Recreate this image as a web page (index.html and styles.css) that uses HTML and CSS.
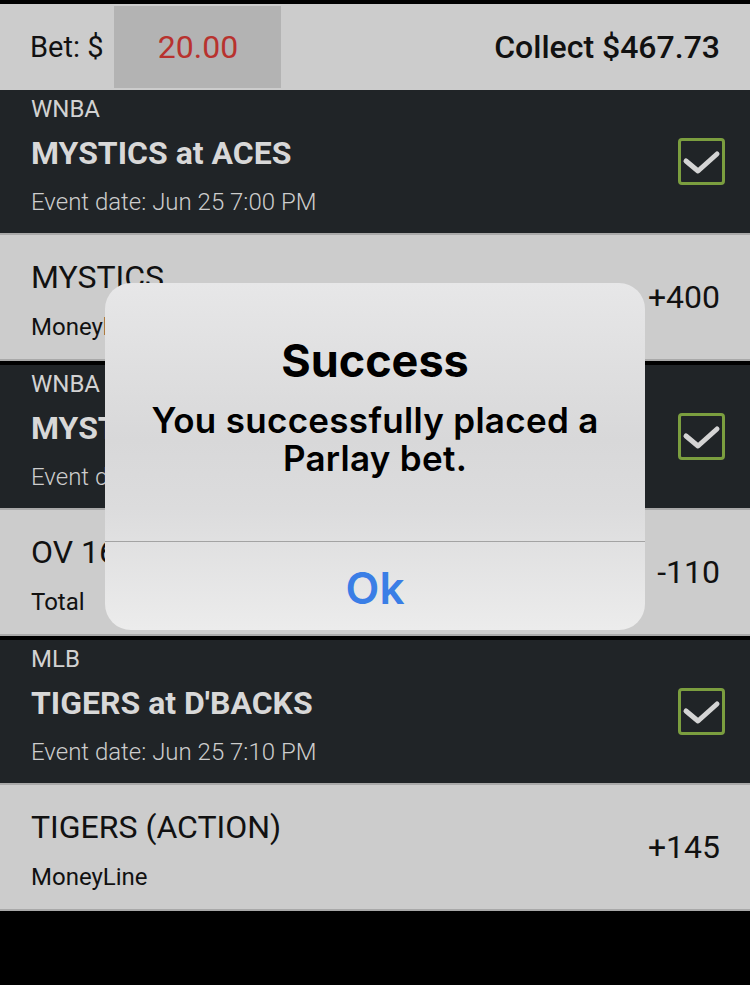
FILE: index.html
```html
<!DOCTYPE html>
<html lang="en">
<head>
    <meta charset="UTF-8">
    <meta name="viewport" content="width=device-width, initial-scale=1.0">
    <title>Parlay Slip</title>
    <link rel="stylesheet" href="styles.css">
</head>
<body>
    <div class="slip">
        <!-- Bet amount and payout -->
        <header class="bet-bar">
            <span class="bet-label">Bet: $</span>
            <span class="bet-input">20.00</span>
            <span class="collect">Collect $467.73</span>
        </header>

        <section class="leg">
            <div class="event">
                <div class="event-info">
                    <div class="league">WNBA</div>
                    <div class="matchup">MYSTICS at ACES</div>
                    <div class="event-date">Event date: Jun 25 7:00 PM</div>
                </div>
                <span class="check">
                    <svg viewBox="3 3 41 41" width="41" height="41"><polyline points="8,23 20,33 39,16" /></svg>
                </span>
            </div>
            <div class="pick">
                <div class="pick-info">
                    <div class="pick-name">MYSTICS</div>
                    <div class="pick-type">Moneyline</div>
                </div>
                <div class="odds">+400</div>
            </div>
        </section>

        <section class="leg">
            <div class="event">
                <div class="event-info">
                    <div class="league">WNBA</div>
                    <div class="matchup">MYSTICS at ACES</div>
                    <div class="event-date">Event date: Jun 25 7:00 PM</div>
                </div>
                <span class="check">
                    <svg viewBox="3 3 41 41" width="41" height="41"><polyline points="8,23 20,33 39,16" /></svg>
                </span>
            </div>
            <div class="pick">
                <div class="pick-info">
                    <div class="pick-name">OV 164.5</div>
                    <div class="pick-type">Total</div>
                </div>
                <div class="odds">-110</div>
            </div>
        </section>

        <section class="leg">
            <div class="event">
                <div class="event-info">
                    <div class="league">MLB</div>
                    <div class="matchup">TIGERS at D'BACKS</div>
                    <div class="event-date">Event date: Jun 25 7:10 PM</div>
                </div>
                <span class="check">
                    <svg viewBox="3 3 41 41" width="41" height="41"><polyline points="8,23 20,33 39,16" /></svg>
                </span>
            </div>
            <div class="pick">
                <div class="pick-info">
                    <div class="pick-name">TIGERS (ACTION)</div>
                    <div class="pick-type">MoneyLine</div>
                </div>
                <div class="odds">+145</div>
            </div>
        </section>
    </div>

    <!-- Confirmation alert -->
    <div class="alert">
        <div class="alert-body">
            <div class="alert-title">Success</div>
            <div class="alert-message">You successfully placed a Parlay bet.</div>
        </div>
        <div class="alert-button">Ok</div>
    </div>
</body>
</html>
```

FILE: styles.css
```css
body {
    margin: 0;
    padding: 4px 0 0;
    background-color: #000;
    font-family: Roboto, "Noto Sans", sans-serif;
    height: 981px;
    overflow: hidden;
    position: relative;
}

.bet-bar {
    display: flex;
    align-items: center;
    height: 86px;
    padding: 0 30px;
    background-color: #cccccc;
    color: #111;
}

.bet-label {
    font-size: 29px;
}

.bet-input {
    width: 167px;
    height: 82px;
    margin-left: 11px;
    display: flex;
    align-items: center;
    justify-content: center;
    background-color: #b3b3b3;
    color: #b8322e;
    font-size: 32px;
}

.collect {
    margin-left: auto;
    font-size: 32px;
    font-weight: 500;
}

.leg + .leg {
    margin-top: 4px;
}

.event {
    display: flex;
    align-items: center;
    height: 143px;
    box-sizing: border-box;
    padding: 0 25px 0 31px;
    background-color: #202427;
}

.event-info {
    flex: 1;
    align-self: flex-start;
    padding-top: 4px;
}

.league {
    font-size: 24px;
    line-height: 30px;
    color: #d2d2d2;
}

.matchup {
    font-size: 32px;
    line-height: 58px;
    font-weight: 700;
    color: #d8d8d8;
}

.event-date {
    font-size: 24px;
    line-height: 40px;
    font-weight: 300;
    color: #cdcdcd;
}

.check {
    width: 47px;
    height: 47px;
    box-sizing: border-box;
    border: 3px solid #7b9e3f;
    border-radius: 4px;
    display: flex;
    align-items: center;
    justify-content: center;
}

.check polyline {
    fill: none;
    stroke: #d4d4d4;
    stroke-width: 5;
    stroke-linecap: round;
    stroke-linejoin: round;
}

.pick {
    display: flex;
    align-items: center;
    height: 124px;
    padding: 0 30px 0 31px;
    background-color: #cccccc;
    border-top: 2px solid #a9a9a9;
    border-bottom: 2px solid #a9a9a9;
    color: #111;
}

.pick-info {
    flex: 1;
    align-self: flex-start;
    padding-top: 22px;
}

.pick-name {
    font-size: 32px;
    line-height: 40px;
}

.pick-type {
    font-size: 24px;
    line-height: 40px;
    margin-top: 10px;
}

.odds {
    font-size: 32px;
}

.alert {
    position: absolute;
    left: 105px;
    top: 283px;
    width: 540px;
    height: 347px;
    display: flex;
    flex-direction: column;
    border-radius: 26px;
    overflow: hidden;
    background: linear-gradient(180deg, #e7e7e8 0%, #d8d8d9 45%, #dcdcdd 65%, #ececec 100%);
    font-family: Inter, "Noto Sans", sans-serif;
    color: #000;
    text-align: center;
}

.alert-body {
    height: 259px;
    box-sizing: border-box;
    padding: 52px 24px 0;
    border-bottom: 1px solid #a3a3a3;
}

.alert-title {
    font-size: 45px;
    line-height: 52px;
    font-weight: 700;
}

.alert-message {
    margin-top: 14px;
    font-size: 35px;
    line-height: 38px;
    font-weight: 600;
    letter-spacing: 0.3px;
}

.alert-button {
    flex: 1;
    display: flex;
    align-items: center;
    justify-content: center;
    padding-top: 3px;
    font-size: 44px;
    font-weight: 600;
    color: #3a7ee6;
}
```
